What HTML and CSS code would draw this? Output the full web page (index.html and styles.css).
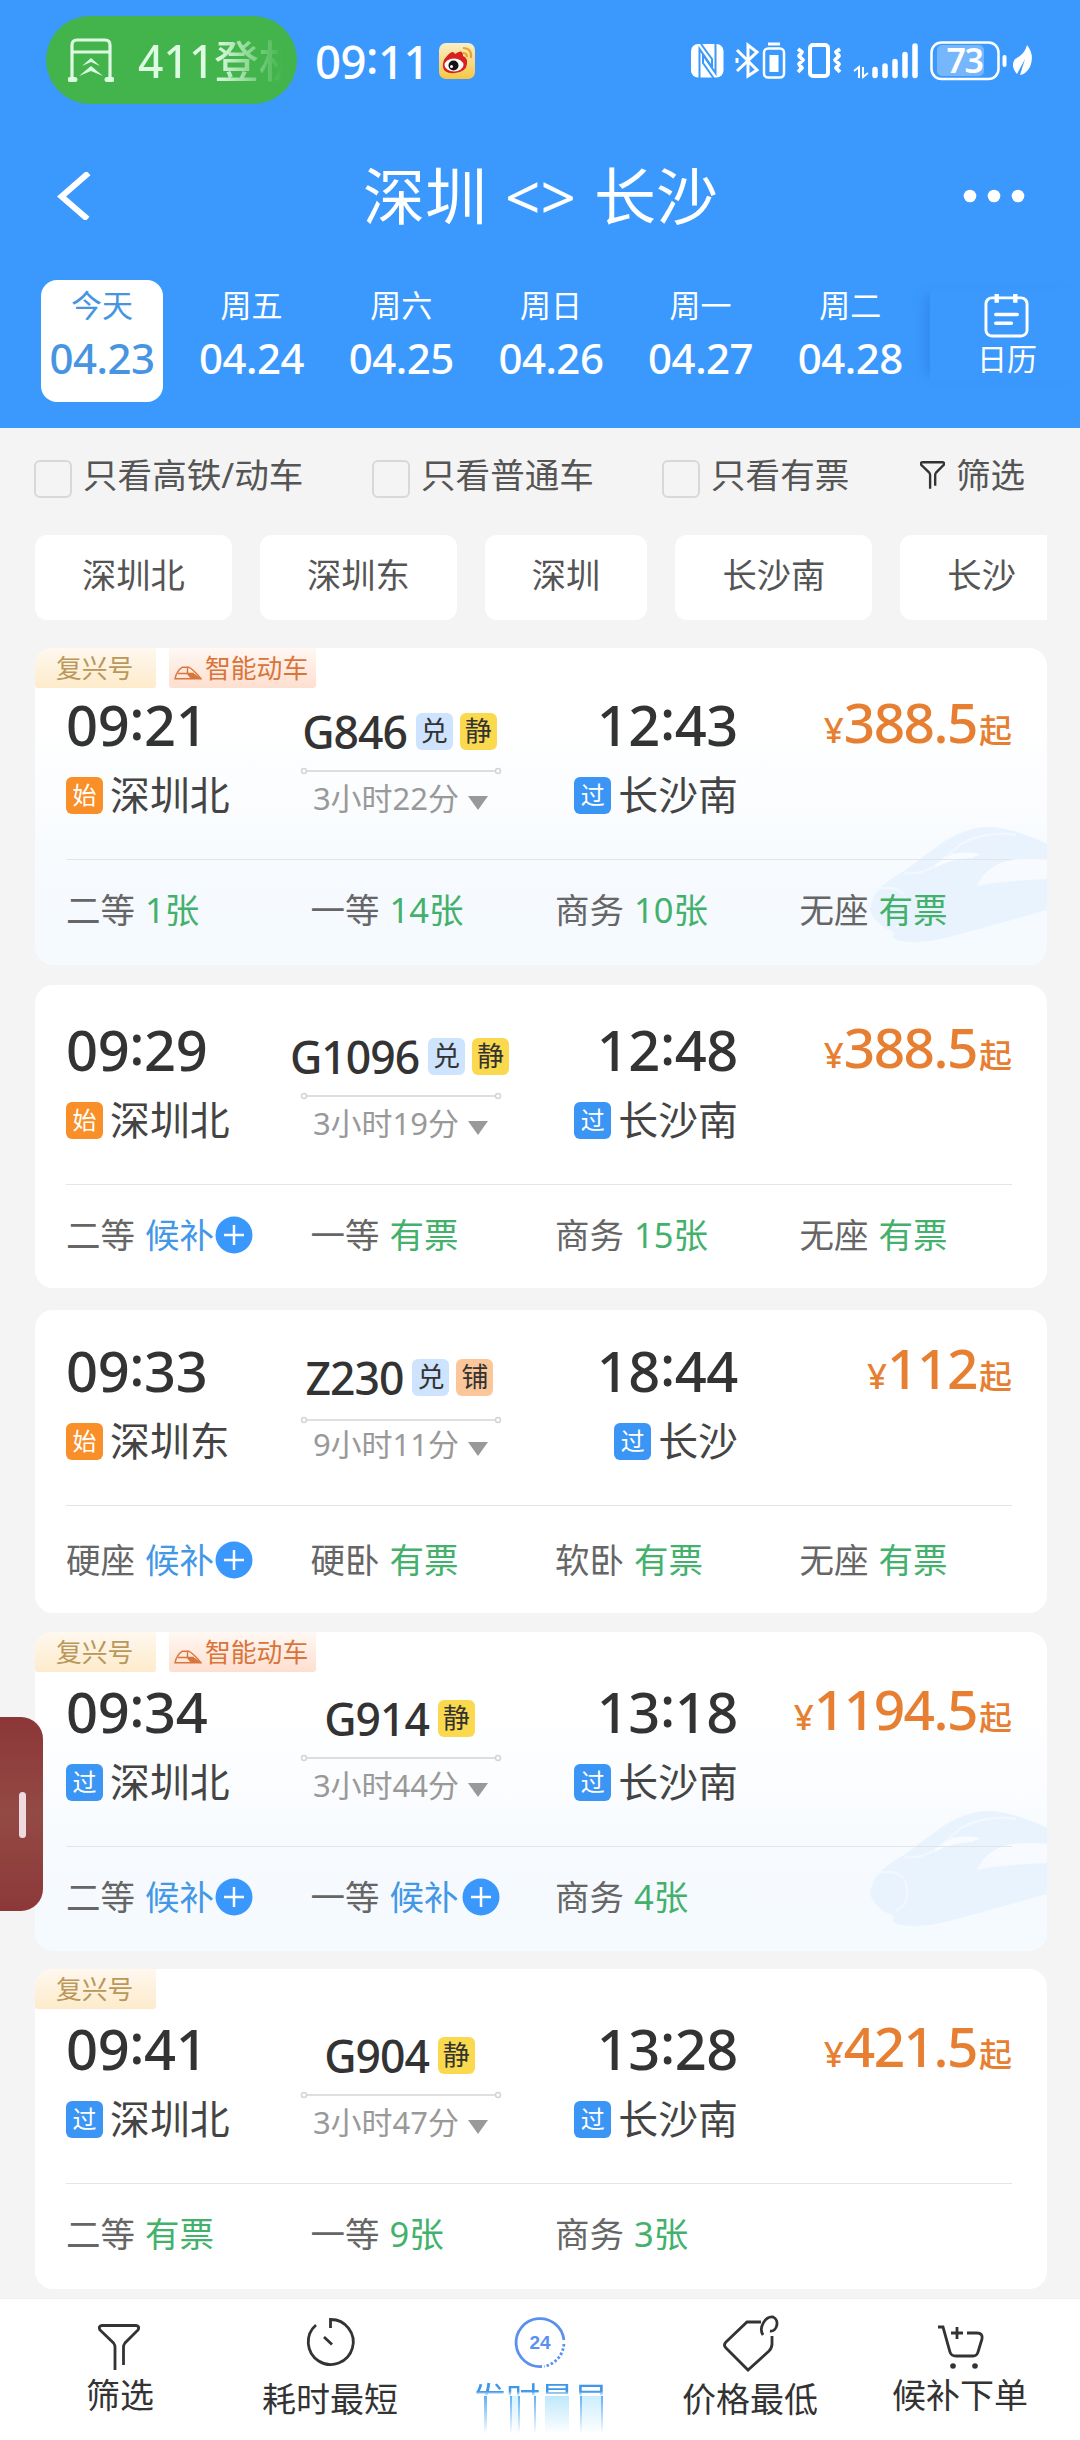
FILE: index.html
```html
<!DOCTYPE html>
<html lang="zh-CN">
<head>
<meta charset="utf-8">
<title>深圳 - 长沙</title>
<link rel="stylesheet" href="styles.css">
</head>
<body>
<svg width="0" height="0" class="defs" aria-hidden="true">
  <symbol id="funnel" viewBox="0 0 42 46"><path d="M17 46V23Q17 21 15.500 19L2 6Q0 2 4 1.500H38Q42 2 40 6L27 19Q25.500 21 25.500 23V41"/></symbol>
  <symbol id="rail" viewBox="0 0 202 8"><path d="M7 4H195"/><circle cx="4" cy="4" r="2.500"/><circle cx="198" cy="4" r="2.500"/></symbol>
  <symbol id="plus" viewBox="0 0 38 38"><circle cx="19" cy="19" r="18.500" fill="#3a97fb"/><path d="M9 19H29M19 9V29" stroke="#fff" stroke-width="2.500"/></symbol>
  <symbol id="mini-train" viewBox="0 0 28 14"><path d="M1 12.800Q2.500 5 8.500 1.200H14.500Q19 3 27 12.800ZM4 7.500H20M13.500 1.500V8" fill="none" stroke="#d9743a" stroke-width="1.400"/><path d="M13 8H21L27 13H17Z" fill="#d9743a"/></symbol>
  <symbol id="train" viewBox="0 0 178 116"><path fill="#e9f3fe" d="M1 82Q3 69 11 61Q22 51 35 44L66 21Q81 9 97 4Q110-1 125 0Q153 4 178 17V33Q140 29 124 40Q112 48 108 59Q140 53 178 52V83Q150 91 84 109Q66 114 49 115Q26 115 24 110L25 105Q4 97 1 82Z"/><path d="M36 46Q54 48 67 38L92 17Q117 3 147 8M10 62Q36 57 38 78Q40 94 27 100" fill="none" stroke="#f3f8ff" stroke-width="2"/><path d="M66 38L83 27Q97 24 112 27L103 31Q84 31 66 41Z" fill="#f8fbff"/></symbol>
</svg>

<header class="top">
  <div class="status">
    <div class="pill">
      <svg class="gate" viewBox="0 0 46 44" fill="none" stroke="#dcfbe0" stroke-width="3.200"><path d="M4 41V7Q4 2 9 2H37Q42 2 42 7V41M4 14H42"/><path d="M2 41.500H7M39 41.500H44" stroke-width="5" stroke-linecap="round"/><path d="M11 38L23 28L35 38L23 33ZM14 28L23 20L32 28L23 24Z" fill="#dcfbe0" stroke="none"/></svg>
      <span class="pill-text">411登机</span>
    </div>
    <span class="clock">09<i class="colon">:</i>11</span>
    <svg class="weibo" viewBox="0 0 36 36"><defs><linearGradient id="wb" x2="0" y2="1"><stop stop-color="#f9efc8"/><stop offset="1" stop-color="#f6c745"/></linearGradient></defs><rect width="36" height="36" rx="7" fill="url(#wb)"/><path d="M4 24Q3 18 8 13Q14 6 16 11Q24 5 24 13Q29 15 28 21Q27 29 16 30Q5 31 4 24Z" fill="#d8211e"/><ellipse cx="15" cy="22" rx="9.500" ry="6.500" fill="#fff"/><circle cx="14.500" cy="22.500" r="5" fill="#141414"/><circle cx="12.500" cy="23.500" r="1.500" fill="#fff"/><path d="M24 5Q33 5 32 15M24 10Q28 10 28 14" fill="none" stroke="#eda12c" stroke-width="2.200"/></svg>
    <div class="status-icons">
      <svg width="346" height="42" viewBox="689 40 346 42" fill="none" stroke="#fff">
        <rect x="691" y="44" width="32.500" height="33.500" rx="7" fill="#fff" stroke="none"/><path d="M699.500 78V49L712 67V59L701 44M715.500 43.500V73L703 55V63L713.500 78" stroke="#3b99fd" stroke-width="2"/>
        <path d="M737 50L757 70L748 76V45L757 52L737 71M737 58V63" stroke-width="3"/>
        <rect x="764" y="48.500" width="20" height="29" rx="4" stroke-width="2.500"/><rect x="769.500" y="55" width="9" height="17" fill="#fff" stroke="none"/><path d="M768 44H780" stroke-width="3"/>
        <rect x="810" y="45" width="18" height="31" rx="3" stroke-width="4"/><path d="M798 49L802 52L799 56L803 60L799 64L802 68L798 72M840 49L836 52L839 56L835 60L839 64L836 68L840 72" stroke-width="3.800" stroke-linejoin="round"/>
        <path d="M854 71L859 67V78M868 73L863 77V67" stroke-width="2"/><path d="M875 69.500V75.500M885 66V75.500M895 61.500V75.500M905 54.500V75.500M915 46V75.500" stroke-width="5.500" stroke-linecap="round"/>
        <rect x="937" y="45" width="47" height="31" rx="5" fill="#75b6fd" stroke="none"/><rect x="931.500" y="42.500" width="67" height="36.500" rx="10" stroke-width="2.500"/><path d="M1004.500 57V65" stroke-width="4" stroke-linecap="round"/>
        <path d="M1027 45Q1035 55 1030 67Q1026 74 1020 75L1025 59L1017 74Q1010 66 1015 59Q1025 54 1027 45Z" fill="#fff" stroke="none"/>
        <text x="964.500" y="72.500" text-anchor="middle" class="level">73</text>
      </svg>
    </div>
  </div>

  <div class="title-bar">
    <svg class="back" viewBox="0 0 34 48" fill="none" stroke="#fff" stroke-width="6"><path d="M31.500 1L4.500 24.500L30.500 47"/></svg>
    <h1>深圳 &lt;&gt; 长沙</h1>
    <svg class="more" viewBox="0 0 62 14" fill="#fff"><circle cx="7" cy="7" r="6.300"/><circle cx="31" cy="7" r="6.300"/><circle cx="55" cy="7" r="6.300"/></svg>
  </div>

  <nav class="dates">
    <div class="days">
      <div class="day today"><span>今天</span><b>04.23</b></div>
      <div class="day"><span>周五</span><b>04.24</b></div>
      <div class="day"><span>周六</span><b>04.25</b></div>
      <div class="day"><span>周日</span><b>04.26</b></div>
      <div class="day"><span>周一</span><b>04.27</b></div>
      <div class="day"><span>周二</span><b>04.28</b></div>
    </div>
    <div class="calendar">
      <svg viewBox="0 0 46 46" fill="none" stroke="#fff" stroke-width="3"><rect x="2" y="5" width="42" height="39" rx="6"/><path d="M13 1V10M32 1V10" stroke-width="4.500"/><path d="M12 22H34M12 31H28" stroke-width="3.500" stroke-linecap="round"/></svg>
      <span>日历</span>
    </div>
  </nav>
</header>

<section class="filters">
  <label class="check c1"><i></i>只看高铁/动车</label>
  <label class="check c2"><i></i>只看普通车</label>
  <label class="check c3"><i></i>只看有票</label>
  <span class="screen"><svg class="funnel-s"><use href="#funnel"/></svg>筛选</span>
</section>

<section class="chips">
  <span>深圳北</span><span>深圳东</span><span>深圳</span><span>长沙南</span><span>长沙</span>
</section>

<main class="list">
  <article class="card smart k1">
    <svg class="watermark"><use href="#train"/></svg>
    <div class="tags"><span class="tag fx">复兴号</span><span class="tag zn"><svg><use href="#mini-train"/></svg>智能动车</span></div>
    <div class="trip">
      <div class="stop"><div class="time">09<i class="colon">:</i>21</div><div class="station"><em class="start">始</em>深圳北</div></div>
      <div class="mid"><div class="number">G846<em class="dui">兑</em><em class="jing">静</em></div><svg class="rail"><use href="#rail"/></svg><div class="dur">3小时22分<i></i></div></div>
      <div class="stop end"><div class="time">12<i class="colon">:</i>43</div><div class="station"><em>过</em>长沙南</div></div>
      <div class="price"><small>¥</small>388.5<u>起</u></div>
    </div>
    <div class="seats"><span>二等 <b>1张</b></span><span>一等 <b>14张</b></span><span>商务 <b>10张</b></span><span>无座 <b>有票</b></span></div>
  </article>

  <article class="card k2">
    <div class="trip">
      <div class="stop"><div class="time">09<i class="colon">:</i>29</div><div class="station"><em class="start">始</em>深圳北</div></div>
      <div class="mid"><div class="number">G1096<em class="dui">兑</em><em class="jing">静</em></div><svg class="rail"><use href="#rail"/></svg><div class="dur">3小时19分<i></i></div></div>
      <div class="stop end"><div class="time">12<i class="colon">:</i>48</div><div class="station"><em>过</em>长沙南</div></div>
      <div class="price"><small>¥</small>388.5<u>起</u></div>
    </div>
    <div class="seats"><span>二等 <b class="wait">候补<svg><use href="#plus"/></svg></b></span><span>一等 <b>有票</b></span><span>商务 <b>15张</b></span><span>无座 <b>有票</b></span></div>
  </article>

  <article class="card k3">
    <div class="trip">
      <div class="stop"><div class="time">09<i class="colon">:</i>33</div><div class="station"><em class="start">始</em>深圳东</div></div>
      <div class="mid"><div class="number">Z230<em class="dui">兑</em><em class="pu">铺</em></div><svg class="rail"><use href="#rail"/></svg><div class="dur">9小时11分<i></i></div></div>
      <div class="stop end"><div class="time">18<i class="colon">:</i>44</div><div class="station"><em>过</em>长沙</div></div>
      <div class="price"><small>¥</small>112<u>起</u></div>
    </div>
    <div class="seats"><span>硬座 <b class="wait">候补<svg><use href="#plus"/></svg></b></span><span>硬卧 <b>有票</b></span><span>软卧 <b>有票</b></span><span>无座 <b>有票</b></span></div>
  </article>

  <article class="card smart k4">
    <svg class="watermark"><use href="#train"/></svg>
    <div class="tags"><span class="tag fx">复兴号</span><span class="tag zn"><svg><use href="#mini-train"/></svg>智能动车</span></div>
    <div class="trip">
      <div class="stop"><div class="time">09<i class="colon">:</i>34</div><div class="station"><em>过</em>深圳北</div></div>
      <div class="mid"><div class="number">G914<em class="jing">静</em></div><svg class="rail"><use href="#rail"/></svg><div class="dur">3小时44分<i></i></div></div>
      <div class="stop end"><div class="time">13<i class="colon">:</i>18</div><div class="station"><em>过</em>长沙南</div></div>
      <div class="price"><small>¥</small>1194.5<u>起</u></div>
    </div>
    <div class="seats"><span>二等 <b class="wait">候补<svg><use href="#plus"/></svg></b></span><span>一等 <b class="wait">候补<svg><use href="#plus"/></svg></b></span><span>商务 <b>4张</b></span></div>
  </article>

  <article class="card k5">
    <div class="tags"><span class="tag fx">复兴号</span></div>
    <div class="trip">
      <div class="stop"><div class="time">09<i class="colon">:</i>41</div><div class="station"><em>过</em>深圳北</div></div>
      <div class="mid"><div class="number">G904<em class="jing">静</em></div><svg class="rail"><use href="#rail"/></svg><div class="dur">3小时47分<i></i></div></div>
      <div class="stop end"><div class="time">13<i class="colon">:</i>28</div><div class="station"><em>过</em>长沙南</div></div>
      <div class="price"><small>¥</small>421.5<u>起</u></div>
    </div>
    <div class="seats"><span>二等 <b>有票</b></span><span>一等 <b>9张</b></span><span>商务 <b>3张</b></span></div>
  </article>
</main>

<aside class="side-tab"><i></i></aside>

<footer class="tabs">
  <div class="tab t1"><svg viewBox="0 0 60 60"><use href="#funnel" x="8" y="11" width="42" height="46"/></svg><span>筛选</span></div>
  <div class="tab t2"><svg viewBox="0 0 60 60"><path d="M16 12A22.500 22.500 0 1 0 30.500 6.500V15M24 24L32 31.500"/></svg><span>耗时最短</span></div>
  <div class="tab t3"><svg viewBox="0 0 60 60" class="blue"><path d="M32 53.500A24 24 0 1 1 53.900 27"/><path d="M53.900 31A24 24 0 0 1 34 53.300" stroke-dasharray="2.500 2"/><text x="30" y="36" text-anchor="middle">24</text></svg>
    <span class="fading">发时最早</span>
    <div class="streaks"><i></i></div>
  </div>
  <div class="tab t4"><svg viewBox="0 0 60 60"><path d="M41 9H27L6 29Q3 32 6 35L28 57L49 38Q52 35 52 31V23M43 22C38 14 46 3 53 4C60 7 57 19 50 18"/></svg><span>价格最低</span></div>
  <div class="tab t5"><svg viewBox="0 0 60 60"><path d="M8 14H13L20 39Q21 43 26 43H43Q47 43 48 39L52 26Q53 20 47 20H37M27 14V26M21 20H33"/><circle cx="23" cy="53" r="2.800" class="dot"/><circle cx="45" cy="53" r="2.800" class="dot"/></svg><span>候补下单</span></div>
</footer>
</body>
</html>
```
FILE: styles.css
```css
* { box-sizing: border-box; }
body {
  margin: 0;
  width: 1080px;
  height: 2440px;
  overflow: hidden;
  position: relative;
  display: flex;
  flex-direction: column;
  background: #f4f4f4;
  color: #333;
  font-family: "Noto Sans", "Noto Sans CJK SC", sans-serif;
}
i, em { font-style: normal; }
u { text-decoration: none; }
svg { display: block; flex: none; }
.defs { position: absolute; }
.colon { display: inline-block; transform: translateY(-0.1em); }

/* header */
.top { height: 428px; flex: none; background: #3b99fd; color: #fff; }
.status { height: 120px; padding: 16px 45px 16px 46px; display: flex; align-items: center; }
.pill { width: 251px; height: 88px; border-radius: 44px; background: #43b44c; display: flex; align-items: center; padding-left: 22px; }
.gate { width: 46px; height: 44px; margin-right: 24px; }
.pill-text {
  width: 148px; overflow: hidden; white-space: nowrap; font-size: 44.500px; line-height: 62px; padding-top: 1px; font-weight: 500;
  background: linear-gradient(90deg, #dcfbe0 78px, #43b44c 144px); -webkit-background-clip: text; background-clip: text; color: transparent;
}
.clock { font-size: 45.500px; line-height: 60px; padding-top: 1px; font-weight: 500; letter-spacing: -.5px; margin-left: 18px; width: 124px; }
.weibo { width: 36px; height: 36px; margin-top: 2px; }
.status-icons { margin: 1px 0 0 auto; }
.level { font: 600 34px "Noto Sans", sans-serif; fill: #fff; stroke: none; letter-spacing: -1.500px; }
.title-bar { height: 152px; display: flex; align-items: center; padding: 0 55px 0 57px; justify-content: space-between; }
.back { width: 34px; height: 48px; margin-right: 27px; }
.more { width: 62px; height: 14px; }
h1 { margin: 0; font-size: 62px; line-height: 80px; font-weight: 400; white-space: nowrap; word-spacing: 2px; }
.dates { display: flex; padding-top: 8px; }
.days { display: flex; padding-left: 27px; width: 930px; height: 122px; }
.day { width: 149.700px; display: flex; flex-direction: column; align-items: center; padding-top: 7px; }
.day.today { width: 122px; margin: 0 13.700px 0 14px; background: #fff; border-radius: 16px; color: #4795e2; }
.day span { font-size: 31px; line-height: 37px; }
.day b { font-size: 42px; line-height: 68px; font-weight: 500; letter-spacing: -.5px; }
.calendar { width: 150px; height: 92px; margin-top: 9px; padding: 4px 0 0 54px; display: flex; flex-direction: column; box-shadow: -10px 0 12px -6px #3288ea; }
.calendar svg { width: 45px; height: 45px; }
.calendar span { font-size: 30px; line-height: 44px; margin: -1px 0 0 -7px; }

/* filters */
.filters { height: 107px; flex: none; padding: 26px 35px 0 34px; display: flex; color: #555; font-size: 34.600px; line-height: 42px; white-space: nowrap; }
.check { display: flex; }
.check i { width: 38px; height: 38px; margin: 6px 11px 0 0; border: 2px solid #d8d8d8; border-radius: 6px; }
.c1 { width: 338px; }
.c2 { width: 290px; }
.c3 { width: 258px; }
.screen { display: flex; }
.funnel-s { width: 25px; height: 30px; margin: 6px 11px 0 0; fill: none; stroke: #333; stroke-width: 4; overflow: visible; }
.chips { height: 113px; flex: none; width: 1047px; overflow: hidden; padding-left: 35px; display: flex; gap: 28px; }
.chips span { flex: none; height: 85px; padding: 0 47px; border-radius: 12px; background: #fff; color: #555; font-size: 34.300px; line-height: 80px; }

/* train cards */
.list { padding: 0 33px 0 35px; flex: none; height: 1650px; }
.card { position: relative; overflow: hidden; display: flex; flex-direction: column; border-radius: 18px; background: #fff; }
.smart { background: linear-gradient(#fff 22%, #f6fafe 75%, #f5faff); }
.watermark { position: absolute; right: 0; top: 179px; width: 178px; height: 116px; }
.k1 { height: 317px; margin-bottom: 20px; }
.k2 { height: 303px; margin-bottom: 22px; padding-top: 35px; }
.k3 { height: 303px; margin-bottom: 19px; padding-top: 31px; }
.k4 { height: 319px; margin-bottom: 18px; }
.k5 { height: 320px; }
.tags { height: 40px; margin-bottom: 7px; display: flex; gap: 13px; flex: none; }
.k4 .tags, .k5 .tags { margin-bottom: 10px; }
.tag { display: flex; font-size: 25.800px; line-height: 40px; white-space: nowrap; }
.fx { width: 121px; padding-left: 21px; color: #b9985a; background: linear-gradient(#fff8ef, #fdebcb); border-radius: 0 0 3px 3px; }
.zn { width: 147px; padding-left: 5px; color: #d9743a; background: linear-gradient(#fff8f4, #fddfcf); border-radius: 0 0 3px 3px; }
.zn svg { width: 28px; height: 14px; margin: 18px 3px 0 0; }
.trip { height: 164px; flex: none; margin: 0 35px 0 31px; display: grid; grid-template-columns: 234px 202px 236px 1fr; position: relative; }
.time { height: 56px; line-height: 58px; font-size: 56px; font-weight: 500; letter-spacing: -.4px; }
.stop { display: flex; flex-direction: column; gap: 25px; }
.end { align-items: flex-end; }
.station { display: flex; align-items: center; height: 38px; font-size: 39.900px; line-height: 38px; color: #444; white-space: nowrap; }
.station em { width: 37px; height: 37px; border-radius: 6px; background: #3a95f5; color: #fff; font-size: 24px; line-height: 36px; text-align: center; margin-right: 7px; }
.station .start { background: #f88f28; }
.mid { display: flex; flex-direction: column; align-items: center; padding-top: 17px; }
.number { display: flex; align-items: center; height: 40px; margin: -1px 0 1px -3px; font-size: 44.500px; line-height: 35px; font-weight: 500; letter-spacing: -1px; white-space: nowrap; }
.number em { width: 37px; height: 37px; border-radius: 6px; margin-left: 7px; font-size: 27px; line-height: 36px; text-align: center; letter-spacing: 0; font-weight: 400; color: #333; }
.number em:first-of-type { margin-left: 9px; }
.dui { background: #cee3fd; }
.jing { background: #fbd94f; }
.number .pu { background: #fbc79a; }
.rail { width: 202px; height: 8px; margin-top: 15px; fill: #fff; stroke: #d2d4d7; stroke-width: 1.500; }
.k3 .rail { margin: 18px 0 -3px; }
.dur { display: flex; align-items: center; margin: 4px 0 0 -1px; height: 38px; font-size: 31px; line-height: 38px; color: #999; white-space: nowrap; }
.dur i { margin: 9px 0 0 9px; border: 10px solid transparent; border-top: 14px solid #999; border-bottom: 0; }
.price { text-align: right; font-size: 55px; line-height: 53px; font-weight: 500; letter-spacing: -1.500px; color: #e67f31; white-space: nowrap; }
.price small { font-size: 35px; letter-spacing: 0; }
.price u { font-size: 33px; letter-spacing: 0; margin-left: 2px; }
.seats { flex: none; margin: 0 35px 0 31px; border-top: 1px solid #e3e5e8; padding-top: 30px; display: grid; grid-template-columns: repeat(4, 244.500px); font-size: 34.500px; line-height: 40px; color: #666; position: relative; }
.k3 .seats { padding-top: 34px; }
.seats span { display: flex; gap: 10px; white-space: nowrap; }
.seats b { font-weight: 400; color: #43b16c; }
.seats .wait { display: flex; color: #4297e6; }
.wait svg { width: 38px; height: 38px; margin: 1px 0 0 1px; }
.seats span:nth-child(2) .wait svg { margin-left: 3px; }

.side-tab { position: absolute; left: 0; top: 1717px; width: 43px; height: 194px; border-radius: 0 22px 22px 0; background: linear-gradient(#8c3638, #934a44 50%, #8c3839); }
.side-tab i { position: absolute; left: 19px; top: 75px; width: 7px; height: 46px; border-radius: 4px; background: #efdbdf; }

/* bottom bar */
.tabs { height: 142px; flex: none; border-top: 1px solid #eee; background: #fff; padding: 14px 15px 0; display: flex; }
.tab { width: 210px; display: flex; flex-direction: column; align-items: center; }
.tab svg { width: 60px; height: 60px; fill: none; stroke: #333; stroke-width: 2.800; }
.tab .dot { fill: #333; stroke: none; }
.tab span { font-size: 34px; line-height: 44px; color: #333; margin-top: 4px; }
.t1 span, .t5 span { margin-top: 0; }
.tab .blue { stroke: #5b8ff0; }
.blue text { font: 700 19px "Liberation Sans", sans-serif; fill: #5b8ff0; stroke: none; }
.tab .fading { color: #3f97e8; height: 19px; overflow: hidden; -webkit-mask-image: linear-gradient(#000 75%, transparent); mask-image: linear-gradient(#000 75%, transparent); }
.streaks { width: 134px; height: 38px; -webkit-mask-image: linear-gradient(#000, transparent); mask-image: linear-gradient(#000, transparent); }
.streaks i {
  display: block; height: 100%;
  background: linear-gradient(90deg, transparent 11px, #5fb0f5 11px 14px, transparent 14px 37px, #5fb0f5 37px 39px, #d6f2fd 39px 45px, #5fb0f5 45px 47px, transparent 47px 61px, #5fb0f5 61px 63px, transparent 63px 72px, #bfe8fc 72px 96px, transparent 96px 107px, #5fb0f5 107px 109px, #cceefd 109px 128px, #5fb0f5 128px 130px, transparent 130px);
}
```
